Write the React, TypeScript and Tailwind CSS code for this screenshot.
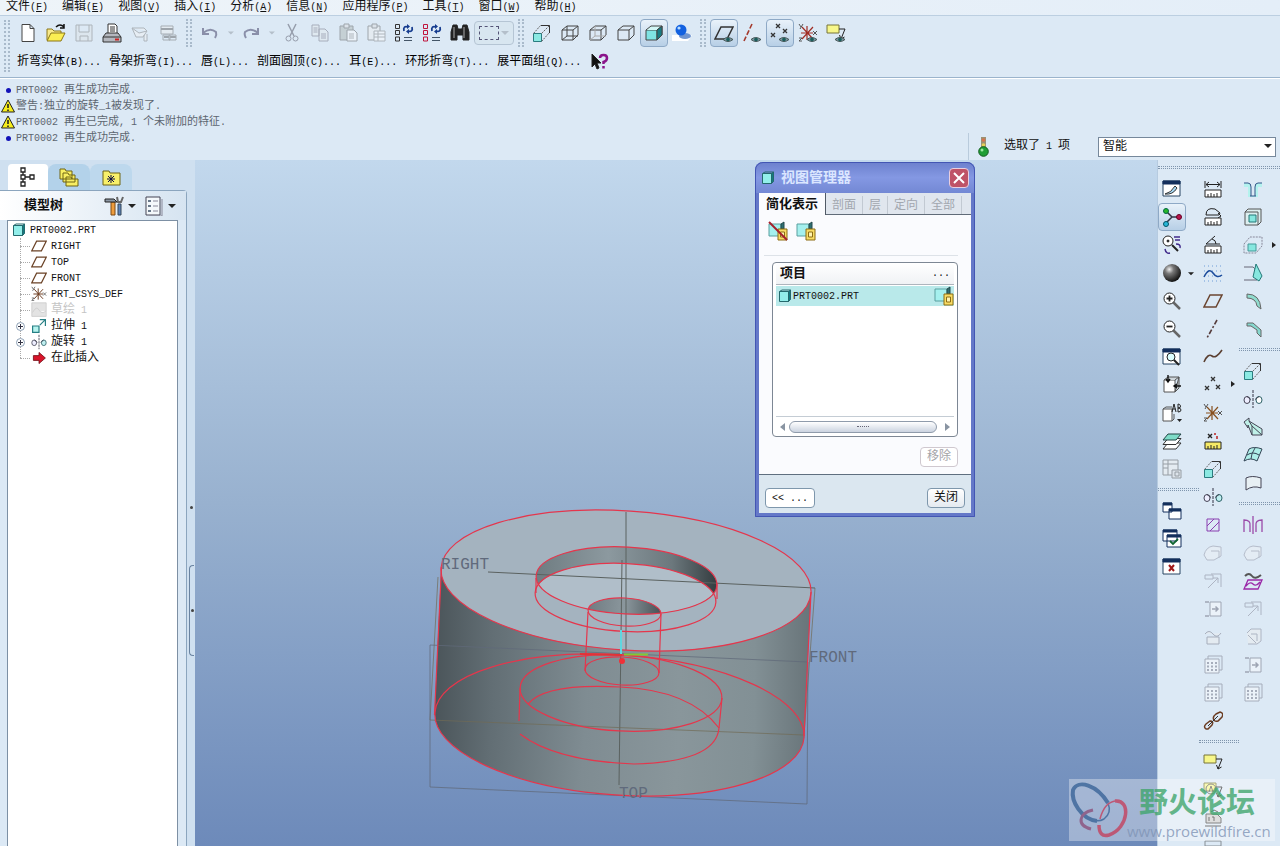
import React from 'react';

type P = { children?: React.ReactNode };

const Svg = ({ children, faded = false }: P & { faded?: boolean }) => (
  <svg viewBox="0 0 20 20" className={`size-5 shrink-0 ${faded ? 'opacity-45' : ''}`} fill="none" stroke="#222" strokeWidth="1" aria-hidden="true">
    {children}
  </svg>
);

/* ASCII runs are set in the half-width monospace face next to full-width CJK glyphs. */
const Txt = ({ t, u = false }: { t: string; u?: boolean }) => (
  <span className="whitespace-pre">
    {t.split(/([\x20-\x7e]+)/).map((part, i) =>
      /^[\x20-\x7e]+$/.test(part) ? (
        <span key={i} className="text-[10px]">
          {u ? part.split(/([A-Z])/).map((c, j) => (/^[A-Z]$/.test(c) ? <u key={j}>{c}</u> : c)) : part}
        </span>
      ) : (
        part
      ),
    )}
  </span>
);

const Eye = () => (
  <g>
    <path d="M9 16.500q4.500-4 10 0q-5 4-10 0z" fill="#7d97a3" stroke="#455" />
    <circle cx="14" cy="16.500" r="1.800" fill="#1b5e5c" stroke="none" />
  </g>
);
const Pages = () => (
  <g stroke="#667">
    <path d="M2 2h7v11H2zM9 6h6l3 3v9H9z" fill="#e4e9ec" />
    <path d="M3.500 5h4M3.500 7h4M3.500 9h4M11 11h5M11 13h5M11 15h5" />
  </g>
);
const TreeSel = ({ c }: { c: string }) => (
  <g>
    <path d="M1.500 1.500h4v4h-4zM1.500 7.500h4v4h-4zM1.500 14h4v4h-4z" stroke={c} />
    <path d="M10 14.500h8M10 17.500h8" stroke="#456" />
    <path d="M10 8c-1-4 1-5 4-4M18 4c1 4-1 5-4 4" stroke="#153c8f" strokeWidth="1.800" />
    <path d="M13 1v5l3-2.500zM15 6v5l-3-2.500z" fill="#153c8f" stroke="none" />
  </g>
);
const Extrude = () => (
  <g>
    <path d="M1.500 10.500h8v8h-8z" fill="#8be9e2" stroke="#2a7c80" />
    <path d="M1.500 10.500l7-8M9.500 10.500l8-8M9.500 18.500l8-9" stroke="#666" strokeDasharray="2 1" />
    <path d="M9 2.500h8.500V10" stroke="#333" />
  </g>
);
const Revolve = ({ c = '#bfeff0' }: { c?: string }) => (
  <g>
    <path d="M10 1v18" stroke="#334" strokeDasharray="3 1" />
    <ellipse cx="4" cy="11" rx="3" ry="3.500" fill="#eef" stroke="#445" />
    <ellipse cx="16" cy="11" rx="3" ry="3.500" fill={c} stroke="#2c6066" />
    <path d="M4 7.500l4 3M16 7.500l-4 3" stroke="#445" />
  </g>
);
const Cube = ({ kind }: { kind: number }) => (
  <g stroke="#444">
    <path d="M2 7h11v10H2z" fill={kind === 3 ? '#7fe3e3' : 'none'} />
    <path d="M2 7l5-4h11l-5 4M18 3v9l-5 5" fill={kind === 3 ? '#d2f6f5' : 'none'} />
    {kind === 0 && <path d="M7 3v10h11M7 13l-5 4" />}
    {kind === 1 && <path d="M7 3v10h11M7 13l-5 4" stroke="#aaa" />}
    {kind === 3 && <path d="M13 7l5-4v9l-5 5z" fill="#197b82" />}
  </g>
);
const Plane = ({ c = '#6b4632' }: { c?: string }) => <path d="M7 4h12l-6 12H1z" stroke={c} strokeWidth="1.500" />;
const Csys = ({ c = '#a02c24' }: { c?: string }) => (
  <g>
    <path d="M3 10h12M9 3v14M4 4l11 12M15 4L4 16" stroke={c} strokeWidth="1.200" />
    <path d="M15 8l4 4M19 8l-4 4M1 1l2 3M5 1L2 6M1 15h3l-3 3h3" stroke="#555" />
  </g>
);
const Points = () => <path d="M8 2l4 4M12 2L8 6M2 11l4 4M6 11l-4 4M13 10l4 4M17 10l-4 4" stroke="#333" strokeWidth="1.300" />;
const Note = () => (
  <g>
    <path d="M1 2h12v8H1z" fill="#f7f78a" stroke="#77743a" />
    <path d="M13 6h6l-4 10M13.500 12l1.500 4 3.500-2" stroke="#222" />
  </g>
);
const Ruler = ({ y = 11, c = '#fff' }: { y?: number; c?: string }) => (
  <path d={`M2 ${y}h16v7H2zM5 ${y + 7}v-3M8 ${y + 7}v-4M11 ${y + 7}v-3M14 ${y + 7}v-4`} fill={c} />
);
const Win = ({ x = 1, y = 2 }: { x?: number; y?: number }) => (
  <g>
    <path d={`M${x} ${y}h17v15H${x}z`} fill="#fff" stroke="#274563" />
    <path d={`M${x} ${y}h17v3H${x}z`} fill="#132f5c" stroke="#132f5c" />
  </g>
);
const Mag = ({ plus = 0 }: { plus?: number }) => (
  <g>
    <path d="M11 11l7 7" strokeWidth="2.500" stroke="#666" />
    <circle cx="7.500" cy="7.500" r="5.500" fill="#fff" />
    {plus > 0 && <path d={plus === 2 ? 'M4.500 7.500h6M7.500 4.500v6' : 'M4.500 7.500h6'} strokeWidth="1.800" />}
  </g>
);
const Box = () => (
  <g>
    <path d="M2 5h11v12H2z" fill="#fff" stroke="#555" />
    <path d="M2 5l4-3h11l-4 3M17 2v11l-4 4z" fill="#cfd7dc" stroke="#555" />
  </g>
);
const Grid = () => (
  <g stroke="#667">
    <path d="M2 4h14v14H2z" fill="#fff" />
    <path d="M5 4V1h14v14h-3" fill="none" />
    <path d="M4 8h2M8 8h2M12 8h2M4 11.500h2M8 11.500h2M12 11.500h2M4 15h2M8 15h2M12 15h2" strokeWidth="2" />
  </g>
);
const Sheet = () => (
  <g stroke="#556">
    <path d="M7 3h11v14H7z" fill="#fff" />
    <path d="M2 3h4M2 17h4M9 10h6M12.500 7.500L15 10l-2.500 2.500" strokeWidth="1.500" />
  </g>
);
const Patch = () => <path d="M1 12q2-8 9-9l8 1v9l-7 4H4zM8 8h8v7" stroke="#889" fill="#eef1f3" />;
const Copy = () => <path d="M2 4h8v4H2zM8 3h10v13M5 17l10-10M10 7h5v5" stroke="#778" />;
const PartIcon = () => (
  <svg viewBox="0 0 14 14" className="size-3.5 shrink-0" stroke="#24696d" aria-hidden="true">
    <path d="M1.500 2.500h9v10h-9z" fill="#92eeea" />
    <path d="M10.500 2.500l2-1.500v9.500l-2 2z" fill="#137b80" />
    <path d="M1.500 2.500L4 1h8.500" fill="none" />
  </svg>
);
const Rep = ({ no = false }: { no?: boolean }) => (
  <g>
    <path d="M1 3h12v12H1z" fill="#a5f0ee" stroke="#5b9fa0" />
    <path d="M13 3l3-2v7h-3z" fill="#2f6f72" stroke="#244a4c" />
    <path d="M10 8h9v11h-9z" fill="#f8dc65" stroke="#8c6d14" />
    <path d="M12.500 11h4v5h-4z" fill="#fff3b0" stroke="#8c6d14" />
    {no && <path d="M1 1l18 18" stroke="#a5202b" strokeWidth="2" />}
  </g>
);

type Tool = { n: string; i: React.ReactNode; off?: boolean; on?: boolean };

const fileTools: Tool[] = [
  { n: '新建', i: <path d="M4 1.500h8l4 4v13H4zM12 1.500v4h4" fill="#fff" stroke="#444" /> },
  { n: '打开', i: <><path d="M1 17V6h5l2 2h7v3" fill="#f8e98b" stroke="#8b7718" /><path d="M1 18l4-8h14l-4 8z" fill="#fbee53" stroke="#8b7718" /><path d="M10 4q4-4 8 0M18 1v4h-4" stroke="#111" strokeWidth="1.500" /></> },
  { n: '保存', off: true, i: <path d="M2 2h16v16H2zM5 2v7h10V2M6 18v-5h8v5" fill="#dde3e6" stroke="#777" /> },
  { n: '打印', i: <><path d="M6 10V1h7l2 2v7" fill="#fff" stroke="#333" /><path d="M1 14l3-4h12l3 4v5H1z" fill="#b4b7be" stroke="#333" /><path d="M1 14h18M8 4h5M8 6h5M8 8h5" stroke="#333" /><path d="M13 16.500h4" stroke="#c22" strokeWidth="2" /></> },
  { n: '邮件', off: true, i: <path d="M2 5h12l3 3-4 6H6zM2 5l7 5 8-2M14 12v6h3v-7" stroke="#777" fill="#f4f4f4" /> },
  { n: '链接', off: true, i: <><path d="M3 3h12v8H3z" fill="#eee" stroke="#666" /><path d="M6 14h5M12 14h6M3 6h12" stroke="#555" strokeWidth="2" /><path d="M5 12h7v5H5zM11 12h7v5h-7z" stroke="#666" /></> },
];
const editTools: Tool[] = [
  { n: '剪切', off: true, i: <><path d="M6 1l6 12M14 1L8 13" stroke="#445" strokeWidth="1.500" /><circle cx="6.500" cy="15.500" r="2.500" stroke="#445" /><circle cx="13.500" cy="15.500" r="2.500" stroke="#445" /></> },
  { n: '复制', off: true, i: <Pages /> },
  { n: '粘贴', off: true, i: <><path d="M2 3h13v14H2z" fill="#aab2ae" stroke="#555" /><path d="M6 1h5v4H6z" fill="#ddd" stroke="#555" /><path d="M9 7h7l3 3v8H9z" fill="#fff" stroke="#555" /><path d="M11 11h5M11 13h5M11 15h5" stroke="#777" /></> },
  { n: '选择性粘贴', off: true, i: <><path d="M2 3h12v14H2z" fill="#eee" stroke="#555" /><path d="M6 1h5v4H6z" fill="#ddd" stroke="#555" /><path d="M8 8h11v10H8zM8 11h11M12 8v10M8 14h11" fill="#fff" stroke="#777" /></> },
  { n: '再生', i: <TreeSel c="#333" /> },
  { n: '再生管理器', i: <TreeSel c="#c0143c" /> },
  { n: '查找', i: <><path d="M1 9l2-7h4l1 4h4l1-4h4l2 7v8h-6v-5H7v5H1z" fill="#222" /><path d="M4 4v11M14 4v11" stroke="#aaa" /></> },
];
const viewTools: Tool[] = [
  { n: '草绘视图', i: <Extrude /> },
  { n: '线框', i: <Cube kind={0} /> },
  { n: '隐藏线', i: <Cube kind={1} /> },
  { n: '无隐藏线', i: <Cube kind={2} /> },
  { n: '着色', on: true, i: <Cube kind={3} /> },
  { n: '渲染', i: <><path d="M0 12h20l-4 6H0z" fill="#fff" stroke="none" /><ellipse cx="13" cy="13" rx="6" ry="3" fill="#6e94d0" stroke="none" /><circle cx="9" cy="7" r="5.500" fill="#1261e0" stroke="none" /><circle cx="7" cy="5" r="1.600" fill="#b7dcff" stroke="none" /></> },
];
const datumTools: Tool[] = [
  { n: '基准平面', on: true, i: <><Plane c="#333" /><Eye /></> },
  { n: '基准轴', i: <><path d="M10 1L2 18" stroke="#a43a2d" strokeWidth="1.600" strokeDasharray="5 2" /><Eye /></> },
  { n: '基准点', on: true, i: <><path d="M6 1l4 4M10 1L6 5M1 10l4 4M5 10l-4 4M13 6l4 4M17 6l-4 4" stroke="#333" strokeWidth="1.300" /><Eye /></> },
  { n: '坐标系', i: <><Csys /><Eye /></> },
  { n: '注释', i: <><Note /><Eye /></> },
];

const sketchA: Tool[] = [
  { n: '重画', i: <><Win /><path d="M3 15q6-1 10-8l2 2q-4 7-12 6z" fill="#a5d8f4" stroke="#333" /></> },
  { n: '旋转中心', on: true, i: <><path d="M4 4l6 6h7M10 10l-6 6" stroke="#334" strokeWidth="1.500" /><circle cx="4" cy="4" r="2.500" fill="#28b828" stroke="#064" /><circle cx="17" cy="10" r="2.500" fill="#b8144c" stroke="#602" /><circle cx="4" cy="17" r="2.500" fill="#28b7d8" stroke="#056" /></> },
  { n: '定向模式', i: <><circle cx="6" cy="6" r="5" fill="#fff" /><path d="M10 10l6 6" strokeWidth="2" /><path d="M12 2h6M13 5h5M3 14q1 5 5 4M14 9q5 0 4 4" stroke="#402a8a" strokeWidth="1.500" /><circle cx="6" cy="6" r="1" fill="#222" /></> },
  { n: '外观', i: <><defs><radialGradient id="ball" cx="0.35" cy="0.3" r="0.7"><stop offset="0" stopColor="#eee" /><stop offset="0.35" stopColor="#777" /><stop offset="1" stopColor="#151515" /></radialGradient></defs><circle cx="10" cy="10" r="9" fill="url(#ball)" stroke="none" /></> },
  { n: '放大', i: <Mag plus={2} /> },
  { n: '缩小', i: <Mag plus={1} /> },
  { n: '重新调整', i: <><Win /><circle cx="9" cy="10" r="4" fill="#dff" /><path d="M12 13l5 5" strokeWidth="2" /></> },
  { n: '重定向', i: <><Box /><path d="M6 0v6M4 4l2 3 2-3M19 11h-6M15 9l-3 2 3 2" stroke="#111" strokeWidth="1.400" /></> },
  { n: '已保存视图', i: <><path d="M1 6h9v12H1z" fill="#fff" stroke="#555" /><path d="M1 6l3-2h6M10 18l2-2v-5" stroke="#555" /><path d="M10 9l2-8 2 8M10.500 6h3M16 1v8q3 0 3-2t-3-2q3 0 2.500-2T16 1" stroke="#222" /><path d="M15 16h5l-2.500 3z" fill="#222" stroke="none" /></> },
  { n: '层', i: <><path d="M6 12h13l-5 6H1z" fill="#fff" stroke="#333" /><path d="M6 7.500h13l-5 6H1z" fill="#fff" stroke="#333" /><path d="M6 3h13l-5 6H1z" fill="#7fdcc8" stroke="#244" /></> },
  { n: '视图管理', off: true, i: <><path d="M1 1h15v15H1zM6 1v15M1 5h15M1 9h5" fill="#eee" stroke="#444" /><path d="M10 11h9v8h-9zM13 13h4v4h-4z" fill="#ddd" stroke="#444" /></> },
];
const windowTools: Tool[] = [
  { n: '新窗口', i: <><path d="M1 2h9v9H1zM7 8h12v10H7z" fill="#fff" stroke="#132f5c" /><path d="M1 3h9M7 9h12" stroke="#132f5c" strokeWidth="3" /></> },
  { n: '激活窗口', i: <><path d="M1 1h14v11H1zM5 6h14v12H5z" fill="#fff" stroke="#132f5c" /><path d="M1 2h14M5 7h14" stroke="#132f5c" strokeWidth="3" /><path d="M8 12l3 3 5-5" stroke="#163" strokeWidth="1.800" /></> },
  { n: '关闭窗口', i: <><Win /><path d="M7 8l5 6M12 8l-5 6" stroke="#a01818" strokeWidth="2" /></> },
];
const measureTools: Tool[] = [
  { n: '距离', i: <><path d="M2 2v7M18 2v7M3 5.500h14M6 3L3 5.500 6 8M14 3l3 2.500L14 8" /><Ruler /></> },
  { n: '弧长', i: <><path d="M3 8q0-8 9-6l5 4-1 2H3M15 6l3 3-3 2" /><Ruler /></> },
  { n: '角度', i: <><path d="M17 9H3l9-8M9 4q4 1 4 5" /><Ruler /></> },
  { n: '草绘', i: <><path d="M1 3h18M1 8h18M1 13h18M1 18h18" stroke="#6c9cd8" strokeDasharray="1 3" /><path d="M1 14q5-10 9-4t9 2" stroke="#1c4c9c" strokeWidth="1.500" /></> },
  { n: '平面', i: <Plane /> },
  { n: '轴', i: <path d="M14 1L4 19" stroke="#553c3c" strokeWidth="1.600" strokeDasharray="5 2 2 2" /> },
  { n: '曲线', i: <path d="M1 15q4-9 8-6t10-6" stroke="#5b4032" strokeWidth="1.600" /> },
  { n: '点', i: <Points /> },
  { n: '坐标', i: <Csys c="#87501f" /> },
  { n: '分析特征', i: <><path d="M5 3l4 4M9 3L5 7" strokeWidth="1.400" /><path d="M12 2v2M14 5v3" stroke="#b22" strokeWidth="1.500" /><Ruler c="#f6ea66" /></> },
  { n: '拉伸', i: <Extrude /> },
  { n: '旋转', i: <Revolve /> },
  { n: '填充', i: <path d="M4 4h12v12H4zM4 11l7-7M7 16l9-9" stroke="#8a3fb0" /> },
  { n: '边界', off: true, i: <Patch /> },
  { n: '偏移', off: true, i: <Copy /> },
  { n: '延伸', off: true, i: <Sheet /> },
  { n: '修剪', off: true, i: <path d="M2 7q4-5 8 0t8-1M4 10h12v7H4z" stroke="#667" fill="#eee" /> },
  { n: '阵列', off: true, i: <Grid /> },
  { n: '几何阵列', off: true, i: <Grid /> },
  { n: '链', i: <><path d="M3 18q-3-2 0-5l4-3q4 0 2 4l-4 4zM11 9q-2-3 2-6l4-2q4 1 2 5l-4 4q-3 1-4-1z" stroke="#6b3c22" strokeWidth="1.500" /><path d="M5 15l10-10" stroke="#333" /></> },
];
const noteTools: Tool[] = [
  { n: '注释特征', i: <Note /> },
  { n: '基准目标', i: <><Note /><circle cx="8" cy="8" r="5" stroke="#555" /><path d="M6 11l2-6 2 6" stroke="#555" /></> },
  { n: '参考', i: <><path d="M3 5h11l4 4v5H3z" fill="#ccc" stroke="#444" /><path d="M6 8v4M9 8h2v4M8 3l3-2 4 2M2 17h16" stroke="#333" /></> },
  { n: '传播', off: true, i: <path d="M2 4h16v5H2zM5 12h10" /> },
];
const solidTools: Tool[] = [
  { n: '孔', i: <><path d="M1 4h4q3 0 3 4v9h4V8q0-4 3-4h4v4h-4v10H5V8H1z" fill="#b4f2ee" stroke="none" /><path d="M1 4h4q3 0 3 4v9M19 4h-4q-3 0-3 4v9M7 17h6" stroke="#358" /></> },
  { n: '壳', i: <><path d="M2 5h13v13H2zM2 5l3-3h13v13l-3 3" fill="#dceff0" stroke="#555" /><path d="M6 8h7v7H6z" fill="#86e7df" stroke="#277" /></> },
  { n: '筋', i: <><path d="M1 9l6-7h12v9l-6 7H1z" stroke="#889" strokeDasharray="2 1" /><path d="M5 9h8v7H5z" fill="#86e7df" stroke="#499" /></> },
  { n: '拔模', i: <><path d="M1 4h9q4 2 4 13H1" stroke="#667" /><path d="M13 1l6 12-3 5-6-4z" fill="#86e7df" stroke="#277" /></> },
  { n: '倒圆角', i: <path d="M4 3q13 0 14 15l-4-3Q13 7 4 7z" fill="#8fdcce" stroke="#666" /> },
  { n: '倒角', i: <path d="M4 4h6l8 7v7l-4-4v-3L8 7H4z" fill="#86d8cf" stroke="#666" /> },
];
const shapeTools: Tool[] = [
  { n: '拉伸特征', i: <Extrude /> },
  { n: '旋转特征', i: <Revolve c="#fff" /> },
  { n: '扫描', i: <path d="M1 5l5-4v3l13 8v6H9L5 8v3zM6 4l3 5v9M9 9l10 9" fill="#bff0e8" stroke="#445" /> },
  { n: '边界混合', i: <path d="M6 4q5-3 13 0l-5 12q-6-4-13 0zM12 3q-4 6-4 11M4 10q6-4 12 0" fill="#aeeee8" stroke="#345" /> },
  { n: '造型', i: <path d="M3 5q6-3 15 0v10q-8-3-15 2z" fill="#e8f0f4" stroke="#445" /> },
];
const surfTools: Tool[] = [
  { n: '镜像', i: <path d="M10 1v18M1 17V5q7 0 6 6v6M19 17V5q-7 0-6 6v6" stroke="#9a4aa8" strokeWidth="1.300" /> },
  { n: '合并', off: true, i: <Patch /> },
  { n: '投影', i: <><path d="M2 5q4-4 7 0t9-1" stroke="#555" strokeWidth="2" /><path d="M5 9h14l-4 9H1zM3 15q4-5 7-2t7-2" stroke="#9a28a8" strokeWidth="1.300" /></> },
  { n: '加厚', off: true, i: <Copy /> },
  { n: '实体化', off: true, i: <path d="M4 6l4-4h10v12l-4 3H5M5 8l8 8M8 7h6v7" stroke="#778" fill="#eee" /> },
  { n: '延拓', off: true, i: <Sheet /> },
  { n: '表', off: true, i: <Grid /> },
];

const Btn = ({ t }: { t: Tool }) => (
  <button
    type="button"
    aria-label={t.n}
    className={`flex h-7 w-7 shrink-0 items-center justify-center ${t.on ? 'rounded-sm border border-[#8ea9c6] bg-linear-to-b from-[#e9f2fa] to-[#b7cfe6]' : ''}`}
  >
    <Svg faded={t.off}>{t.i}</Svg>
  </button>
);
const Row = ({ tools }: { tools: Tool[] }) => <>{tools.map((t) => <Btn key={t.n} t={t} />)}</>;
const Col = ({ tools }: { tools: Tool[] }) => (
  <div className="flex flex-col">{tools.map((t) => <Btn key={t.n} t={t} />)}</div>
);
const VGrip = () => <div className="mx-1 h-7 w-1.5 shrink-0 border-x-2 border-dotted border-[#a9bacb]" />;
const HGrip = () => <div className="mt-[5px] mb-1.5 h-[3px] w-full shrink-0 border-y border-dotted border-[#7f95ad]" />;
const Tri = ({ c = 'border-t-[#222]' }: { c?: string }) => (
  <span className={`inline-block h-0 w-0 border-x-4 border-t-4 border-x-transparent ${c}`} />
);

const menus = ['文件(F)', '编辑(E)', '视图(V)', '插入(I)', '分析(A)', '信息(N)', '应用程序(P)', '工具(T)', '窗口(W)', '帮助(H)'];
const commands = ['折弯实体(B)...', '骨架折弯(I)...', '唇(L)...', '剖面圆顶(C)...', '耳(E)...', '环形折弯(T)...', '展平面组(Q)...'];
const messages = [
  { w: false, t: 'PRT0002 再生成功完成.' },
  { w: true, t: '警告:独立的旋转_1被发现了.' },
  { w: true, t: 'PRT0002 再生已完成, 1 个未附加的特征.' },
  { w: false, t: 'PRT0002 再生成功完成.' },
];

const planeNode = <Plane c="#6b4226" />;
const nodes: { t: string; i: React.ReactNode; plus?: boolean; dim?: boolean }[] = [
  { t: 'RIGHT', i: planeNode },
  { t: 'TOP', i: planeNode },
  { t: 'FRONT', i: planeNode },
  { t: 'PRT_CSYS_DEF', i: <Csys c="#6b3a1c" /> },
  { t: '草绘 1', dim: true, i: <path d="M1 1h18v17H1zM2 13q5-9 8-3t9 1" fill="#e3e3e3" stroke="#ccc" /> },
  { t: '拉伸 1', plus: true, i: <><path d="M2 10h8v8H2z" fill="#b6f3ee" stroke="#267f84" strokeWidth="1.500" /><path d="M11 2h7v8M11 9l6-6" stroke="#267f84" strokeWidth="1.500" /></> },
  { t: '旋转 1', plus: true, i: <Revolve /> },
  { t: '在此插入', i: <path d="M3 7h7V3l8 7-8 7v-4H3z" fill="#d8142a" stroke="#6d0b14" /> },
];

function ModelTree() {
  return (
    <aside className="flex w-[195px] shrink-0 flex-col bg-[#cfe0f0]">
      <div className="flex h-[30px] items-end pl-2" role="tablist">
        <button type="button" role="tab" aria-selected="true" aria-label="模型树" className="flex h-[26px] w-10 items-center justify-center rounded-t bg-white">
          <Svg><path d="M3 1h4v4H3zM3 8h4v4H3zM3 15h4v4H3zM12 8h4v4h-4zM5 5v3M5 12v3M7 10h5" strokeWidth="1.300" /></Svg>
        </button>
        <button type="button" role="tab" aria-selected="false" aria-label="文件夹浏览器" className="flex h-[26px] w-[42px] items-center justify-center rounded-t-lg bg-[#b3d2ea]">
          <Svg><path d="M1 2h5l1 2h6v8H1zM4 6h5l1 2h6v7H4zM7 10h5l1 2h6v7H7z" fill="#f8ee62" stroke="#6f6515" /></Svg>
        </button>
        <button type="button" role="tab" aria-selected="false" aria-label="收藏夹" className="flex h-[26px] w-[42px] items-center justify-center rounded-t-lg bg-[#bdd8ed]">
          <Svg><path d="M2 4h6l1 2h10v12H2z" fill="#f8f06a" stroke="#6f6515" /><path d="M10 8v8M6 12h8M7 9l6 6M13 9l-6 6" stroke="#114" /></Svg>
        </button>
      </div>
      <div className="mr-2 flex min-h-0 flex-1 flex-col rounded-tr border-t border-r border-[#8ba5be] bg-[#dce9f5]">
        <div className="flex h-[29px] items-center bg-linear-to-r from-white to-[#d6e4f1] pr-2.5 pl-6">
          <h2 className="flex-1 text-[13px] font-bold">模型树</h2>
          <button type="button" aria-label="设置" className="mr-2 flex items-center gap-1">
            <Svg><path d="M7 6h4v13H7z" fill="#ee9c3c" stroke="#7d4a16" /><path d="M1 6V3h9l3 3H5z" fill="#8d98a5" /><path d="M14 8h3v11h-3z" fill="#5c83bb" stroke="#345" /><path d="M13 1l1 5h3l2-5" stroke="#666" strokeWidth="2" /></Svg>
            <Tri />
          </button>
          <button type="button" aria-label="显示" className="flex items-center gap-1">
            <Svg><path d="M2 1h14v18H2z" fill="#f4f8fb" stroke="#445" /><path d="M4 5h3M4 10h3M4 15h3" strokeWidth="2" stroke="#68788a" /><path d="M9 5h5M9 10h5M9 15h5M18 3v17H5" stroke="#889" /></Svg>
            <Tri />
          </button>
        </div>
        <div className="mr-2 ml-[7px] flex-1 border border-b-0 border-[#7d90a4] bg-white px-1 pt-px" role="tree">
          <div className="flex h-4 items-center gap-1" role="treeitem">
            <PartIcon />
            <Txt t="PRT0002.PRT" />
          </div>
          <div className="relative">
            <div className="absolute top-0 left-2 h-[120px] border-l border-dotted border-[#aaa]" />
            {nodes.map((n) => (
              <div key={n.t} role="treeitem" className={`flex h-4 items-center pl-1 ${n.dim ? 'text-[#c4c4c4]' : ''}`}>
                <span className="relative flex w-[15px] items-center">
                  {n.plus ? (
                    <button type="button" aria-label={`展开 ${n.t}`} className="flex size-[9px] items-center justify-center rounded-full border border-[#8da0b5] bg-white">
                      <svg viewBox="0 0 7 7" className="size-[7px]" stroke="#334" aria-hidden="true"><path d="M1 3.500h5M3.500 1v5" /></svg>
                    </button>
                  ) : (
                    <span className="ml-1 w-2.5 border-t border-dotted border-[#aaa]" />
                  )}
                </span>
                <svg viewBox="0 0 20 20" className="mr-1 size-4" fill="none" stroke="#333" aria-hidden="true">{n.i}</svg>
                <Txt t={n.t} />
              </div>
            ))}
          </div>
        </div>
      </div>
    </aside>
  );
}

function Model() {
  return (
    <svg viewBox="420 500 450 310" className="absolute top-[340px] left-[225px] h-[310px] w-[450px]" fill="none" role="img" aria-label="零件模型">
      <defs>
        <linearGradient id="side" gradientUnits="userSpaceOnUse" x1="435" y1="0" x2="811" y2="0">
          <stop offset="0" stopColor="#4b555a" />
          <stop offset="0.15" stopColor="#626e74" />
          <stop offset="0.4" stopColor="#7f8c92" />
          <stop offset="0.65" stopColor="#89969b" />
          <stop offset="0.85" stopColor="#829095" />
          <stop offset="1" stopColor="#687479" />
        </linearGradient>
        <linearGradient id="wall" gradientUnits="userSpaceOnUse" x1="536" y1="0" x2="717" y2="0">
          <stop offset="0" stopColor="#6f7c81" />
          <stop offset="0.4" stopColor="#8c999f" />
          <stop offset="0.75" stopColor="#6c787d" />
          <stop offset="1" stopColor="#343d40" />
        </linearGradient>
        <linearGradient id="bore" gradientUnits="userSpaceOnUse" x1="588" y1="0" x2="661" y2="0">
          <stop offset="0" stopColor="#707c82" />
          <stop offset="0.5" stopColor="#8b979d" />
          <stop offset="1" stopColor="#485155" />
        </linearGradient>
        <clipPath id="rim"><ellipse cx="626.500" cy="580.500" rx="90.500" ry="33.500" transform="rotate(3 626.500 580.500)" /></clipPath>
        <clipPath id="edge"><ellipse cx="625.500" cy="597.500" rx="90.500" ry="34" transform="rotate(3 625.500 597.500)" /></clipPath>
      </defs>
      <ellipse cx="619.500" cy="725" rx="185" ry="70" transform="rotate(3.850 619.500 725)" fill="url(#side)" />
      <path d="M441 570L434.500 715L804 738L811 592z" fill="url(#side)" />
      <ellipse cx="626" cy="580.500" rx="185.400" ry="69.500" transform="rotate(3.850 626 580.500)" fill="#a4b3bf" />
      <g clipPath="url(#rim)">
        <rect x="530" y="540" width="195" height="80" fill="url(#wall)" />
        <ellipse cx="625.500" cy="597.500" rx="90.500" ry="34" transform="rotate(3 625.500 597.500)" fill="#b0bec9" />
        <g clipPath="url(#edge)">
          <ellipse cx="624.500" cy="612" rx="36.500" ry="14" transform="rotate(3 624.500 612)" fill="url(#bore)" />
        </g>
      </g>
      <g stroke="#5b6260" strokeWidth="1">
        <path d="M626 512L626 650M622 560L619 785" />
        <path d="M488 572L815 588" />
        <path d="M438 577L430 720L804 735L815 588" stroke="#716b55" opacity="0.7" />
        <path d="M430 645L430 787L807 804L808 662z" stroke="#60697a" opacity="0.75" />
      </g>
      <g stroke="#e5364c" strokeWidth="1.200">
        <ellipse cx="626" cy="580.500" rx="185.400" ry="69.500" transform="rotate(3.850 626 580.500)" />
        <ellipse cx="619.500" cy="725" rx="185" ry="70" transform="rotate(3.850 619.500 725)" />
        <path d="M441.500 567L434.500 715M811 592L804 736" />
        <ellipse cx="626.500" cy="580.500" rx="90.500" ry="33.500" transform="rotate(3 626.500 580.500)" />
        <ellipse cx="625.500" cy="597.500" rx="90.500" ry="34" transform="rotate(3 625.500 597.500)" />
        <path d="M536 578v15M717 583v16" />
        <ellipse cx="624.500" cy="612" rx="36.500" ry="14" transform="rotate(3 624.500 612)" />
        <path d="M588 612L585 671M661 614L659 673" />
        <ellipse cx="622" cy="671" rx="37" ry="14" transform="rotate(3 622 671)" />
        <ellipse cx="621" cy="693" rx="101" ry="38" transform="rotate(3 621 693)" />
        <path d="M520 688L519 721M722 698L719 728" />
        <path d="M528 704Q545 683 620 687Q690 690 719 728Q716 762 634 764Q555 761 520 734" />
      </g>
      <path d="M621 630v25" stroke="#5fd6df" strokeWidth="2" />
      <path d="M624 654.500h24" stroke="#84c832" strokeWidth="2" />
      <path d="M580 654l42 1" stroke="#e33236" strokeWidth="2" />
      <circle cx="622" cy="661" r="3" fill="#f03038" />
      <g fill="#606a7c" className="font-['Liberation_Mono',monospace] text-[16px]">
        <text x="441" y="569">RIGHT</text>
        <text x="809" y="662">FRONT</text>
        <text x="619" y="798">TOP</text>
      </g>
    </svg>
  );
}

function ViewManager() {
  const tabs = ['剖面', '层', '定向', '全部'];
  return (
    <section aria-label="视图管理器" className="absolute top-[2px] left-[560px] flex w-[220px] flex-col rounded-t-lg border-4 border-t-0 border-[#6478c8] bg-[#fafbfe] outline-1 -outline-offset-1 outline-[#4356b4]">
      <header className="-mx-1 flex h-[31px] items-center gap-1.5 rounded-t-lg bg-linear-to-b from-[#6c80cd] via-[#8498e3] to-[#7388d4] pr-1.5 pl-1.5">
        <PartIcon />
        <h2 className="flex-1 text-[14px] font-bold text-[#dbe6ff]">视图管理器</h2>
        <button type="button" aria-label="关闭窗口" className="flex size-5 items-center justify-center rounded-sm border border-[#e8cfe0] bg-[#bf5367]">
          <svg viewBox="0 0 12 12" className="size-3" stroke="#fff" strokeWidth="2" aria-hidden="true"><path d="M1 1l10 10M11 1L1 11" /></svg>
        </button>
      </header>
      <div className="flex h-[22px] items-end border-b border-[#606b78] bg-[#e0e6ee]" role="tablist">
        <button type="button" role="tab" aria-selected="true" className="-mb-px h-[22px] border-r border-[#505a66] bg-[#fafbfe] px-[7px] pt-0.5 text-[13px] font-bold">简化表示</button>
        {tabs.map((t) => (
          <button key={t} type="button" role="tab" aria-selected="false" className="h-[18px] border-r border-[#c2c9d2] px-1.5 pt-0.5 text-[#a2a7ae]">{t}</button>
        ))}
      </div>
      <div className="flex flex-col px-[13px] pt-0.5">
        <div className="-ml-2 flex border-b border-[#dde2e8] pb-2.5">
          <button type="button" aria-label="排除" className="flex h-7 w-7 items-center justify-center"><Svg><Rep no /></Svg></button>
          <button type="button" aria-label="主表示" className="flex h-7 w-7 items-center justify-center"><Svg><Rep /></Svg></button>
        </div>
        <div className="mt-1.5 flex h-[175px] flex-col rounded border border-[#7d8794] bg-white px-[3px]">
          <div className="flex h-[22px] items-center justify-between border-b border-[#aeb5bd] bg-linear-to-b from-white to-[#f0f2f5] px-1 text-[13px]">
            <b>项目</b>
            <span className="text-[10px]">...</span>
          </div>
          <div className="mt-px flex h-5 items-center gap-px bg-[#b9e9ea] pl-0.5">
            <PartIcon />
            <span className="flex-1"><Txt t="PRT0002.PRT" /></span>
            <Svg><Rep /></Svg>
          </div>
          <div className="mt-auto flex h-5 items-center gap-1 border-t border-[#c4ccd4] px-1">
            <span className="h-0 w-0 border-y-4 border-r-[5px] border-y-transparent border-r-[#8994a2]" />
            <div className="flex h-3 flex-1 items-center justify-center rounded-full border border-[#8f9bab] bg-linear-to-b from-white to-[#cbd3e0]">
              <span className="w-3 border-t border-dotted border-[#667]" />
            </div>
            <span className="ml-1 h-0 w-0 border-y-4 border-l-[5px] border-y-transparent border-l-[#8994a2]" />
          </div>
        </div>
        <button type="button" disabled className="mt-2.5 mb-[7px] h-5 self-end rounded-sm border border-[#cfc8cf] bg-white px-1.5 text-[#a4a4a8]">移除</button>
      </div>
      <footer className="flex h-[39px] items-center justify-between border-t border-[#5f6f7f] bg-[#dbe7f0] px-1.5 pt-2">
        <button type="button" className="h-5 w-[50px] rounded-sm border border-[#7e97ac] bg-white pl-1.5 text-left leading-4"><Txt t="<< ..." /></button>
        <button type="button" className="h-5 rounded-sm border border-[#7e97ac] bg-linear-to-b from-white to-[#e4eaf0] px-1.5 leading-4">关闭</button>
      </footer>
    </section>
  );
}

export default function App() {
  return (
    <div className="relative flex h-screen flex-col overflow-hidden bg-[#dce9f5] font-['Liberation_Mono','Noto_Sans_CJK_SC',monospace] text-[12px] leading-4 text-[#111]">
      <nav className="flex h-4 shrink-0 items-start gap-3.5 border-b border-[#bccfe1] bg-linear-to-r from-[#eef4f9] to-[#e4eef8] pl-1.5 leading-[15px]">
        {menus.map((m) => (
          <button key={m} type="button" className="shrink-0"><Txt t={m} u /></button>
        ))}
      </nav>

      <div className="flex shrink-0 border-b border-[#9bb4cc] pb-[3px]">
        <div className="mx-1 mt-1 h-[52px] w-1.5 shrink-0 border-x-2 border-dotted border-[#a9bacb]" />
        <div className="flex min-w-0 flex-1 flex-col">
          <div className="flex h-[34px] items-center">
            <Row tools={fileTools} />
            <VGrip />
            <button type="button" aria-label="撤消" className="flex h-7 w-7 items-center justify-center opacity-60"><Svg><path d="M3 5v6h6M3 10q7-6 13-1 1 3-1 6" stroke="#557" strokeWidth="2" /></Svg></button>
            <span className="flex w-[13px] scale-75 justify-center"><Tri c="border-t-[#b4bfca]" /></span>
            <button type="button" aria-label="重做" className="flex h-7 w-7 items-center justify-center opacity-60"><Svg><path d="M17 5v6h-6M17 10q-7-6-13-1-1 3 1 6" stroke="#557" strokeWidth="2" /></Svg></button>
            <span className="flex w-[13px] scale-75 justify-center"><Tri c="border-t-[#b4bfca]" /></span>
            <Row tools={editTools} />
            <button type="button" aria-label="选择框" className="flex h-6 w-10 items-center justify-between rounded-sm border border-[#b5c5d4] bg-[#d8e6f0] px-1">
              <span className="h-3.5 w-5 border border-dashed border-[#557]" />
              <Tri c="border-t-[#b4bfca]" />
            </button>
            <VGrip />
            <Row tools={viewTools} />
            <VGrip />
            <Row tools={datumTools} />
          </div>
          <div className="flex h-6 items-center gap-2 pl-[3px] text-black">
            {commands.map((c) => (
              <button key={c} type="button" className="shrink-0"><Txt t={c} /></button>
            ))}
            <button type="button" aria-label="上下文帮助">
              <Svg><path d="M3 2l9 9-4 0 2 5-2 1-2-5-3 3z" fill="#111" /><path d="M11 6q0-3 3.500-3t3.500 3-3.500 4v2M14.500 14v2.500" stroke="#8a148a" strokeWidth="2.500" /></Svg>
            </button>
          </div>
        </div>
      </div>

      <div className="flex h-[82px] shrink-0 items-end border-t border-white">
        <ul className="flex-1 self-start pt-[3px] text-[11px] text-[#5c6670]">
          {messages.map((m, i) => (
            <li key={i} className="flex h-4 items-center">
              <span className="flex w-4 shrink-0 items-center justify-center">
                {m.w ? (
                  <svg viewBox="0 0 14 14" className="size-3.5" stroke="#222" aria-hidden="true"><path d="M7 1l6.500 12H.5z" fill="#f7ee1c" /><path d="M7 5v4M7 10.500v1.500" strokeWidth="1.600" /></svg>
                ) : (
                  <span className="size-[5px] rounded-full bg-[#1212b8]" />
                )}
              </span>
              <Txt t={m.t} />
            </li>
          ))}
        </ul>
        <div className="flex h-[27px] items-center border-l border-[#b9cbdc] pr-1 pl-1">
          <svg viewBox="0 0 20 20" className="size-5" aria-hidden="true">
            <path d="M8 0h5v12H8z" fill="#9b9274" />
            <circle cx="10.500" cy="3" r="1.800" fill="#d7734e" />
            <circle cx="10.500" cy="8" r="1.800" fill="#e7cf59" />
            <circle cx="10.500" cy="14.500" r="4.800" fill="#1f9e35" stroke="#135c1f" />
            <circle cx="9" cy="13" r="1.500" fill="#9be89f" />
          </svg>
          <span className="mr-7 ml-[11px]"><Txt t="选取了 1 项" /></span>
          <div className="relative">
            <select aria-label="过滤器" className="h-5 w-[178px] appearance-none border border-[#76889b] bg-white pl-1 text-[12px]">
              <option>智能</option>
            </select>
            <span className="pointer-events-none absolute top-0 right-1"><Tri /></span>
          </div>
        </div>
      </div>

      <div className="flex min-h-0 flex-1">
        <ModelTree />
        <div className="relative -ml-2 flex w-2 shrink-0 flex-col items-center pt-[346px] text-[#333]">
          <span className="size-[3px] rounded-full bg-[#444]" />
          <span className="mt-14 flex h-[91px] w-[5px] items-center rounded-l border border-r-0 border-[#6983a0]">
            <span className="ml-px size-[3px] rounded-full bg-[#444]" />
          </span>
        </div>
        <main className="relative min-w-0 flex-1 overflow-hidden bg-linear-to-b from-[#c2d8ed] via-[#98b1cf] to-[#6d8aba]">
          <Model />
          <ViewManager />
        </main>
        <aside className="flex w-[123px] shrink-0 flex-col overflow-hidden border-l border-[#b6cbe0] pt-px">
          <HGrip />
          <div className="grid min-h-0 flex-1 grid-cols-3">
            <div className="flex flex-col">
              <div className="relative flex flex-col">
                <Col tools={sketchA} />
                <span className="absolute top-[92px] right-1 scale-75 leading-none"><Tri /></span>
              </div>
              <HGrip />
              <Col tools={windowTools} />
            </div>
            <div className="relative flex flex-col">
              <Col tools={measureTools} />
              <HGrip />
              <Col tools={noteTools} />
              <span className="absolute top-[206px] right-1 h-0 w-0 border-y-[3px] border-l-4 border-y-transparent border-l-[#222]" />
            </div>
            <div className="relative flex flex-col">
              <Col tools={solidTools} />
              <HGrip />
              <Col tools={shapeTools} />
              <HGrip />
              <Col tools={surfTools} />
              <span className="absolute top-[67px] right-1 h-0 w-0 border-y-[3px] border-l-4 border-y-transparent border-l-[#222]" />
            </div>
          </div>
        </aside>
      </div>

      <div className="pointer-events-none absolute right-[5px] bottom-[5px] flex h-[62px] w-[206px] items-center bg-white/35">
        <svg viewBox="0 0 60 62" className="h-[62px] w-[60px] shrink-0 opacity-75" fill="none" strokeWidth="4" aria-hidden="true">
          <path d="M28 42C12 40 2 22 4 11C9 0 28 6 39 24" stroke="#335f94" />
          <path d="M39 24Q43 34 35 40Q30 43 24 41" stroke="#335f94" strokeWidth="1.500" />
          <path d="M24 31C10 34 7 46 22 50" stroke="#8b4a75" strokeWidth="3" />
          <path d="M46 22C62 20 60 49 40 56C33 58 30 54 30 46" stroke="#c63a57" strokeWidth="3.500" />
          <path d="M46 22Q35 24 31 40" stroke="#c63a57" strokeWidth="1.500" />
        </svg>
        <div className="-ml-0.5 flex flex-col items-start whitespace-nowrap">
          <span className="ml-3 font-['Noto_Sans_CJK_SC',sans-serif] text-[29px] leading-[42px] font-bold text-[#3fa56c]/80">野火论坛</span>
          <span className="font-['Open_Sans',sans-serif] text-[15px] leading-5 text-[#7f93b5]/80">www.proewildfire.cn</span>
        </div>
      </div>
    </div>
  );
}
